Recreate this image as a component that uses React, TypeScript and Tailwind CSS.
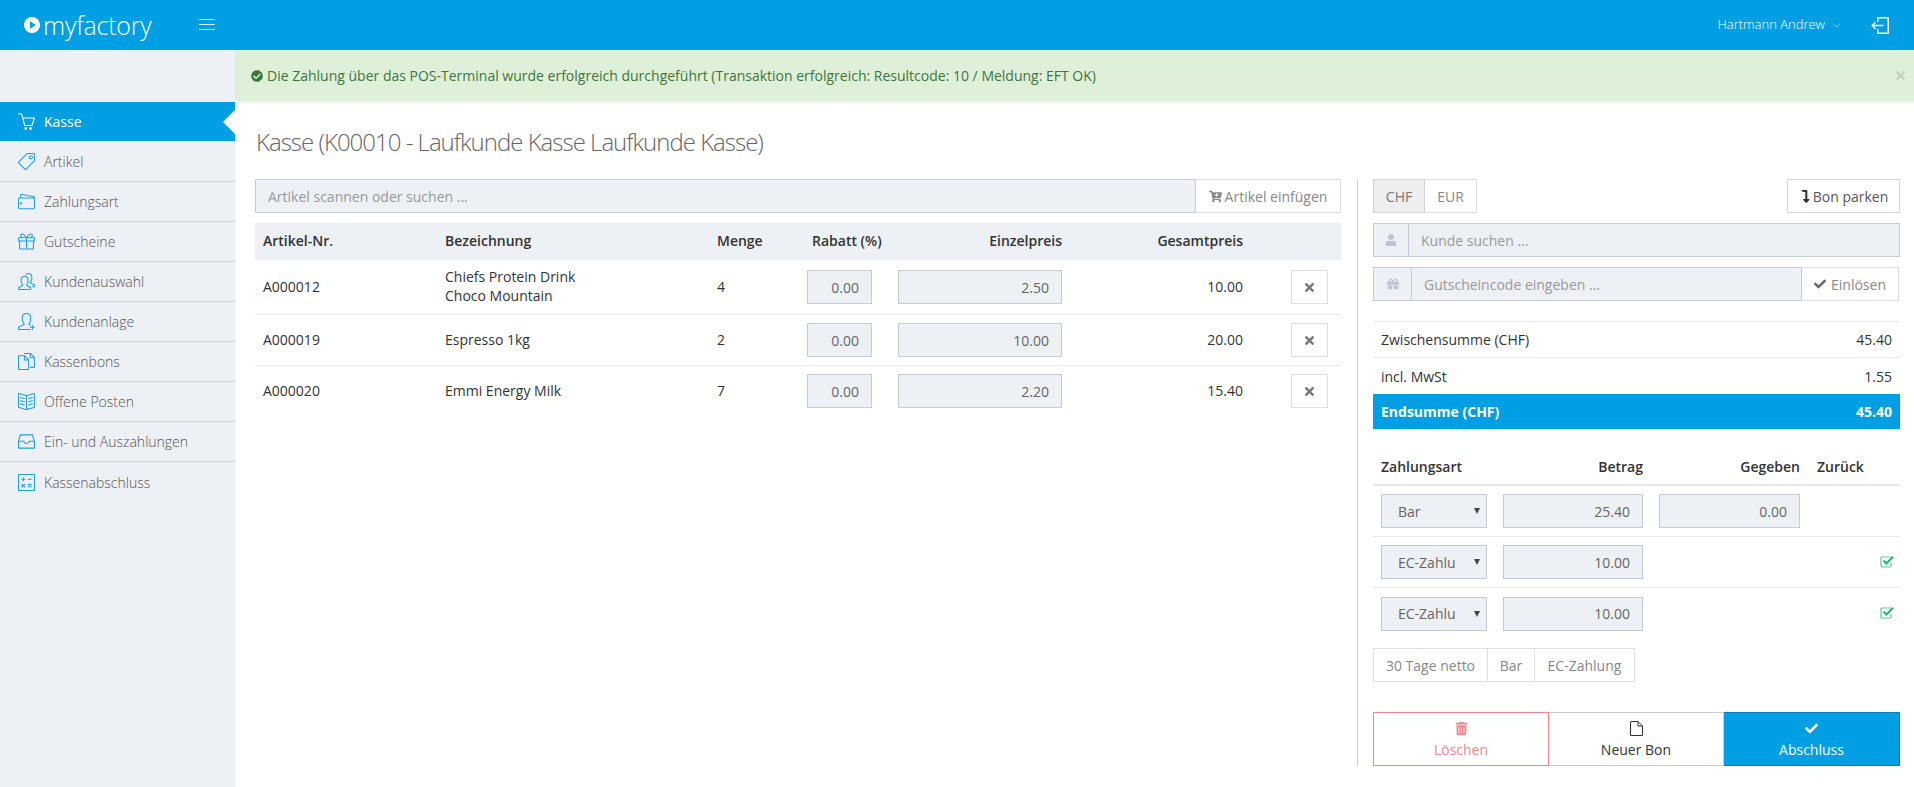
import {
  SlBasket,
  SlTag,
  SlWallet,
  SlPresent,
  SlPeople,
  SlUserFollow,
  SlDocs,
  SlBookOpen,
  SlDrawer,
  SlCalculator,
  SlArrowDown,
} from 'react-icons/sl'
import {
  FaCheckCircle,
  FaCartPlus,
  FaTimes,
  FaUser,
  FaGift,
  FaCheck,
  FaTrashAlt,
  FaLevelDownAlt,
} from 'react-icons/fa'

const navItems = [
  { label: 'Artikel', icon: SlTag },
  { label: 'Zahlungsart', icon: SlWallet },
  { label: 'Gutscheine', icon: SlPresent },
  { label: 'Kundenauswahl', icon: SlPeople },
  { label: 'Kundenanlage', icon: SlUserFollow },
  { label: 'Kassenbons', icon: SlDocs },
  { label: 'Offene Posten', icon: SlBookOpen },
  { label: 'Ein- und Auszahlungen', icon: SlDrawer },
  { label: 'Kassenabschluss', icon: SlCalculator },
]

const articles = [
  { nr: 'A000012', name: ['Chiefs Protein Drink', 'Choco Mountain'], qty: '4', price: '2.50', total: '10.00', h: 'h-[55px]' },
  { nr: 'A000019', name: ['Espresso 1kg'], qty: '2', price: '10.00', total: '20.00', h: 'h-[51px]' },
  { nr: 'A000020', name: ['Emmi Energy Milk'], qty: '7', price: '2.20', total: '15.40', h: 'h-[50px]' },
]

const payments = [
  { type: 'Bar', amount: '25.40', given: '0.00', done: false },
  { type: 'EC-Zahlu', amount: '10.00', given: '', done: true },
  { type: 'EC-Zahlu', amount: '10.00', given: '', done: true },
]

const inputCls =
  'h-[34px] bg-[#edf0f5] border border-[#c5cbdd] px-[12px] text-[14px] text-[#666] outline-none placeholder:text-[#999]'

function CheckSquare() {
  return (
    <svg viewBox="0 0 14 13" className="mb-[2px] ml-auto mr-[6px] h-[13px] w-[14px]" fill="none">
      <path d="M10.5 2H2a1 1 0 0 0-1 1v8a1 1 0 0 0 1 1h8a1 1 0 0 0 1-1V8" stroke="#58c99a" strokeWidth="1.2" />
      <path d="M3.5 5.5 6.5 8.5 13 1.8" stroke="#27b877" strokeWidth="2.2" />
    </svg>
  )
}

function Sidebar() {
  return (
    <aside className="w-[235px] shrink-0 bg-[#edf0f5] pt-[52px]">
      <div className="relative flex h-[39px] items-center bg-[#009fe3] pl-[18px] text-white">
        <SlBasket className="mr-[9px] h-[17px] w-[17px]" />
        <span>Kasse</span>
        <div className="absolute right-0 top-[8px] h-0 w-0 border-y-[12px] border-r-[12px] border-y-transparent border-r-white" />
      </div>
      {navItems.map((item, i) => (
        <div
          key={item.label}
          className={`flex items-center pl-[18px] font-light text-[#555] ${i === 0 ? 'h-[41px]' : 'h-[40px]'} ${
            i < navItems.length - 1 ? 'border-b border-[#cfd2d6]' : ''
          }`}
        >
          <item.icon className="mr-[9px] h-[17px] w-[17px] text-[#1d9fe3]" />
          <span>{item.label}</span>
        </div>
      ))}
    </aside>
  )
}

function ArticleTable() {
  return (
    <div>
      <div className="mt-[10px] flex h-[37px] items-center bg-[#edf0f5] pb-[2px] font-semibold text-[#333]">
        <div className="w-[190px] pl-[8px]">Artikel-Nr.</div>
        <div className="w-[272px]">Bezeichnung</div>
        <div className="w-[90px]">Menge</div>
        <div className="w-[65px] whitespace-nowrap pl-[5px]">Rabatt (%)</div>
        <div className="ml-[26px] w-[164px] text-right">Einzelpreis</div>
        <div className="w-[181px] text-right">Gesamtpreis</div>
      </div>
      {articles.map((a, i) => (
        <div
          key={a.nr}
          className={`flex items-center text-[#333] ${a.h} ${i < 2 ? 'border-b border-[#e7e9ec]' : ''}`}
        >
          <div className="mb-[2px] w-[190px] pl-[8px]">{a.nr}</div>
          <div className="mb-[2px] w-[272px] leading-[19px]">
            {a.name.map((n) => (
              <div key={n}>{n}</div>
            ))}
          </div>
          <div className="mb-[2px] w-[90px]">{a.qty}</div>
          <input readOnly value="0.00" className={`${inputCls} w-[65px] text-right`} />
          <input readOnly value={a.price} className={`${inputCls} ml-[26px] w-[164px] text-right`} />
          <div className="mb-[2px] w-[181px] text-right">{a.total}</div>
          <div className="ml-[48px] flex h-[34px] w-[37px] items-center justify-center border border-[#dcdfe3] text-[#777]">
            <FaTimes className="h-[13px] w-[13px]" />
          </div>
        </div>
      ))}
    </div>
  )
}

function PaymentTable() {
  return (
    <div>
      <div className="mt-[20px] flex h-[37px] items-center border-b-2 border-[#e7e9ec] font-semibold text-[#333]">
        <div className="w-[130px] pl-[8px]">Zahlungsart</div>
        <div className="w-[140px] text-right">Betrag</div>
        <div className="w-[157px] text-right">Gegeben</div>
        <div className="ml-[17px]">Zurück</div>
      </div>
      {payments.map((p, i) => (
        <div
          key={i}
          className={`flex h-[51px] items-center pl-[8px] ${i < 2 ? 'border-b border-[#e7e9ec]' : ''}`}
        >
          <div className="relative flex h-[34px] w-[106px] items-center border border-[#c5cbdd] bg-[#edf0f5] pl-[16px] text-[#666]">
            {p.type}
            <div className="absolute right-[6px] top-[13px] h-0 w-0 border-x-[3.5px] border-t-[6px] border-x-transparent border-t-[#444]" />
          </div>
          <input readOnly value={p.amount} className={`${inputCls} ml-[16px] w-[140px] text-right`} />
          {p.given ? (
            <input readOnly value={p.given} className={`${inputCls} ml-[16px] w-[141px] text-right`} />
          ) : null}
          {p.done ? <CheckSquare /> : null}
        </div>
      ))}
    </div>
  )
}

function SidePanel() {
  return (
    <div className="ml-[16px] h-[587px] w-[543px] border-l border-[#ccc] pl-[15px]">
      <div className="flex justify-between">
        <div className="flex h-[34px]">
          <div className="flex w-[52px] items-center justify-center border border-[#d5d5d5] bg-[#eeeeee] text-[#777]">CHF</div>
          <div className="flex w-[52px] items-center justify-center border border-l-0 border-[#dcdfe3] text-[#888]">EUR</div>
        </div>
        <div className="flex h-[34px] w-[113px] items-center justify-center border border-[#d5d5d5] text-[#555]">
          <FaLevelDownAlt className="mr-[1px] h-[13px] w-[13px] text-[#333]" />
          Bon parken
        </div>
      </div>

      <div className="mt-[10px] flex">
        <div className="flex h-[34px] w-[35px] shrink-0 items-center justify-center border border-r-0 border-[#c5cbdd] bg-[#edf0f5] text-[#bcc4d3]">
          <FaUser className="h-[12px] w-[12px]" />
        </div>
        <input readOnly placeholder="Kunde suchen ..." className={`${inputCls} min-w-0 flex-1`} />
      </div>

      <div className="mt-[10px] flex w-[526px]">
        <div className="flex h-[34px] w-[38px] shrink-0 items-center justify-center border border-r-0 border-[#c5cbdd] bg-[#edf0f5] text-[#bcc4d3]">
          <FaGift className="h-[12px] w-[12px]" />
        </div>
        <input readOnly placeholder="Gutscheincode eingeben ..." className={`${inputCls} min-w-0 flex-1`} />
        <div className="flex h-[34px] w-[97px] shrink-0 items-center justify-center border border-l-0 border-[#dcdfe3] text-[#888]">
          <FaCheck className="mr-[5px] h-[12px] w-[12px] text-[#666]" />
          Einlösen
        </div>
      </div>

      <div className="mt-[20px] flex h-[36px] items-center justify-between border-t border-[#e7e9ec] px-[8px] text-[#333]">
        <span>Zwischensumme (CHF)</span>
        <span>45.40</span>
      </div>
      <div className="flex h-[37px] items-center justify-between border-t border-[#e7e9ec] px-[8px] text-[#333]">
        <span>incl. MwSt</span>
        <span>1.55</span>
      </div>
      <div className="flex h-[35px] items-center justify-between bg-[#009fe3] px-[8px] font-bold text-white">
        <span>Endsumme (CHF)</span>
        <span>45.40</span>
      </div>

      <PaymentTable />

      <div className="mt-[9px] flex h-[34px] text-[#888]">
        <div className="flex w-[115px] items-center justify-center border border-[#dcdfe3]">30 Tage netto</div>
        <div className="flex w-[47px] items-center justify-center border border-l-0 border-[#dcdfe3]">Bar</div>
        <div className="flex w-[100px] items-center justify-center border border-l-0 border-[#dcdfe3]">EC-Zahlung</div>
      </div>

      <div className="mt-[30px] flex h-[54px]">
        <div className="flex w-[176px] flex-col items-center justify-center border border-[#f0868f] pt-[3px] text-[#f0868f]">
          <FaTrashAlt className="mb-[4px] h-[13px] w-[13px]" />
          Löschen
        </div>
        <div className="flex w-[175px] flex-col items-center justify-center border border-l-0 border-[#ccc] pt-[3px] text-[#333]">
          <svg viewBox="0 0 13 15" className="mb-[3px] h-[15px] w-[13px]" fill="none" stroke="#333" strokeWidth="1">
            <path d="M1 .5H8L12.5 5V14.5H.5V.5M8 .5V5H12.5" />
          </svg>
          Neuer Bon
        </div>
        <div className="flex w-[176px] flex-col items-center justify-center border border-l-0 border-[#0a7fc0] bg-[#009fe3] pt-[3px] text-white">
          <FaCheck className="mb-[4px] h-[13px] w-[13px]" />
          Abschluss
        </div>
      </div>
    </div>
  )
}

export default function App() {
  return (
    <div className="flex h-screen flex-col overflow-hidden bg-white font-['Open_Sans',sans-serif] text-[14px]">
      <header className="flex h-[50px] shrink-0 items-center bg-[#009fe3] text-white">
        <div className="ml-[24px] flex items-center">
          <svg viewBox="0 0 16 16" className="h-[16px] w-[16px]">
            <circle cx="8" cy="8" r="8" fill="#fff" />
            <path d="M6 4.2 L12 8 L6 11.8 Z" fill="#009fe3" />
          </svg>
          <span className="ml-[3px] text-[25px] font-light leading-none tracking-[-0.2px]">myfactory</span>
        </div>
        <svg viewBox="0 0 16 12" className="ml-[47px] h-[12px] w-[16px]" stroke="#cfeaf8" strokeWidth="1">
          <path d="M0 .5H16M0 5.5H16M0 10.5H16" />
        </svg>
        <div className="ml-auto flex items-center">
          <span className="text-[13px] font-light">Hartmann Andrew</span>
          <SlArrowDown className="ml-[8px] h-[7px] w-[7px] text-[#cfeaf8]" />
          <svg viewBox="0 0 18 17" className="ml-[31px] mr-[25px] h-[17px] w-[18px]" fill="none" stroke="#fff" strokeWidth="1.5">
            <path d="M6.75 5V.75H17.25V16.25H6.75V12M12.5 8.5H1.2M4.7 5 1.2 8.5 4.7 12" />
          </svg>
        </div>
      </header>

      <div className="flex min-h-0 flex-1">
        <Sidebar />
        <main className="min-w-0 flex-1">
          <div className="flex h-[53px] items-center border-b-2 border-[#eef5ea] bg-[#dff0d8] pl-[16px] text-[#3c763d]">
            <FaCheckCircle className="mr-[4px] h-[12px] w-[12px]" />
            <span>
              Die Zahlung über das POS-Terminal wurde erfolgreich durchgeführt (Transaktion erfolgreich: Resultcode: 10 / Meldung: EFT OK)
            </span>
            <FaTimes className="ml-auto mr-[7px] h-[13px] w-[13px] text-[#c3d3bd]" />
          </div>
          <h1 className="flex h-[76px] items-center pl-[21px] pt-[1px] text-[24px] font-light tracking-[-1px] text-[#666]">
            Kasse (K00010 - Laufkunde Kasse Laufkunde Kasse)
          </h1>
          <div className="flex pl-[20px]">
            <div className="w-[1086px]">
              <div className="flex">
                <input readOnly placeholder="Artikel scannen oder suchen ..." className={`${inputCls} min-w-0 flex-1`} />
                <div className="flex h-[34px] w-[145px] shrink-0 items-center justify-center border border-l-0 border-[#dcdfe3] text-[#888]">
                  <FaCartPlus className="mr-[3px] h-[13px] w-[13px] text-[#888]" />
                  Artikel einfügen
                </div>
              </div>
              <ArticleTable />
            </div>
            <SidePanel />
          </div>
        </main>
      </div>
    </div>
  )
}
